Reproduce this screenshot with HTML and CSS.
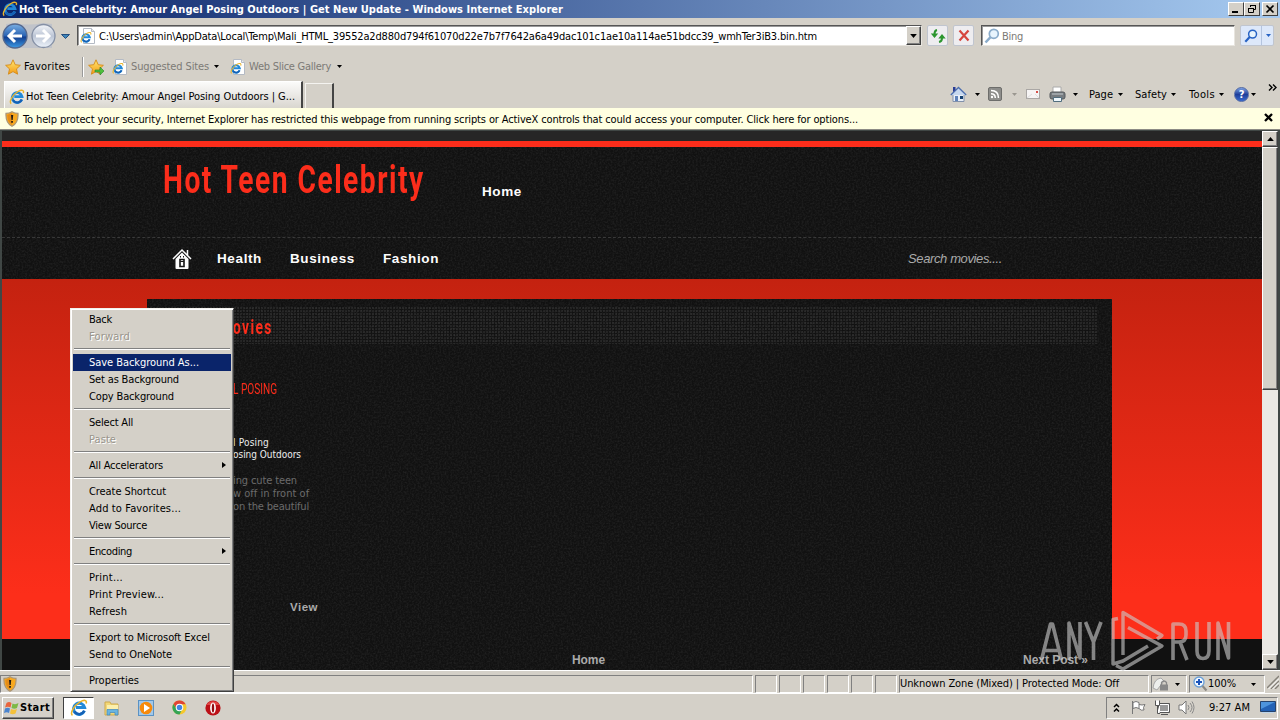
FILE: index.html
```html
<!DOCTYPE html>
<html lang="en">
<head>
<meta charset="utf-8">
<title>Windows Internet Explorer</title>
<link rel="stylesheet" href="styles.css">
</head>
<body>
<svg class="defs" width="0" height="0">
  <defs>
    <linearGradient id="blue" x1="0" y1="0" x2="0" y2="1"><stop offset="0" stop-color="#7ab0e4"/><stop offset=".48" stop-color="#2c65b4"/><stop offset=".55" stop-color="#123f91"/><stop offset="1" stop-color="#3d9be5"/></linearGradient>
    <linearGradient id="pale" x1="0" y1="0" x2="0" y2="1"><stop offset="0" stop-color="#f4f6fa"/><stop offset=".5" stop-color="#bcc5d5"/><stop offset="1" stop-color="#edf3fa"/></linearGradient>
    <linearGradient id="gold" x1="0" y1="0" x2="0" y2="1"><stop offset="0" stop-color="#ffe873"/><stop offset="1" stop-color="#f49a13"/></linearGradient>
    <symbol id="ie" viewBox="0 0 16 16"><path d="M12.8 10.5A5 5 0 1 1 13 7.6H5.3" fill="none" stroke="#2289d8" stroke-width="2.7"/><path d="M12.8 10.5A5 5 0 0 1 4 11" fill="none" stroke="#1660b4" stroke-width="2"/><path d="M2.2 14.6C-.3 12.6 3.500 5.700 9 2.500 12.500.5 15.400.8 14.300 4.100" fill="none" stroke="#e9b42c" stroke-width="1.400"/></symbol>
    <symbol id="iepage" viewBox="0 0 16 16"><path d="M3.500.5h8l3 3v12h-11z" fill="#fff" stroke="#b4bac4"/><path d="M11.500.5v3h3" fill="#e5e9f0" stroke="#b4bac4"/><svg x="0" y="3.500" width="12" height="12"><use href="#ie"/></svg></symbol>
    <symbol id="star" viewBox="0 0 16 16"><path d="M8 .8l2.200 4.900 5.200.6-3.900 3.600 1.100 5.300L8 12.600l-4.600 2.600 1.100-5.300L.6 6.300l5.200-.6z" fill="url(#gold)" stroke="#d58a18" stroke-width=".9"/></symbol>
    <symbol id="shield" viewBox="0 0 16 16"><path d="M8 .7c2 1.300 4 1.700 6 1.700.4 6-1.500 10.500-6 12.900C3.500 12.900 1.600 8.400 2 2.400c2 0 4-.4 6-1.700z" fill="#f8a91f" stroke="#a8957a" stroke-width="1.200"/><path d="M8 2v12c-3-2-4.500-5-4.700-10z" fill="#d97911" opacity=".6"/><path d="M7 4h2.200l-.5 5H7.500zM7.200 10h1.700v1.800H7.200z" fill="#241c12"/></symbol>
    <symbol id="down" viewBox="0 0 5 3"><path d="M0 0h5L2.500 3z" fill="currentColor"/></symbol>
    <symbol id="glass" viewBox="0 0 16 16"><circle cx="9.800" cy="5.800" r="4.500" fill="#e8f4fd" stroke="currentColor" stroke-width="1.700"/><path d="M6.500 9.200L1.500 14.500" stroke="currentColor" stroke-width="2.500"/></symbol>
    <filter id="grain" x="0" y="0" width="100%" height="100%"><feTurbulence type="fractalNoise" baseFrequency=".55" numOctaves="2" seed="4"/><feColorMatrix values="0 0 0 0 .5  0 0 0 0 .5  0 0 0 0 .5  .75 0 0 0 -.27"/></filter>
  </defs>
</svg>

<header class="titlebar">
  <svg class="i16"><use href="#ie"/></svg>
  <span class="t title" data-w="544">Hot Teen Celebrity: Amour Angel Posing Outdoors | Get New Update - Windows Internet Explorer</span>
  <div class="winbtns">
    <span class="wb"><svg width="12" height="10"><path d="M2 8h6" stroke="#000" stroke-width="2"/></svg></span>
    <span class="wb"><svg width="12" height="10"><path d="M4.500 3V1.500h5v4H8M4 1.500h6M2.500 4.500h5v4h-5zM2 4.500h6" fill="none" stroke="#000"/></svg></span>
    <span class="wb close"><svg width="12" height="10"><path d="M2.500 1.500l7 7M9.500 1.500l-7 7" stroke="#000" stroke-width="1.700"/></svg></span>
  </div>
</header>

<div class="navrow">
  <svg class="backfwd" width="77" height="32">
    <path d="M14 3Q28 6 43 3L52 4V28H6V4z" fill="#b8bdca" opacity=".7"/>
    <circle cx="15" cy="16" r="12" fill="url(#blue)" stroke="#54688e" stroke-width="1.300"/><path d="M22 16H10M15 10l-6 6 6 6" fill="none" stroke="#fff" stroke-width="3"/>
    <circle cx="43.500" cy="16" r="11.500" fill="url(#pale)" stroke="#8590a5" stroke-width="1.300"/><path d="M36 16h12M43 10l6 6-6 6" fill="none" stroke="#fff" stroke-width="3"/>
    <path d="M61.500 14.500h8l-4 4z" fill="#3e86ba" stroke="#234e80"/>
  </svg>
  <div class="address sunken"><svg class="i16"><use href="#iepage"/></svg><span class="t" data-w="718">C:\Users\admin\AppData\Local\Temp\Mali_HTML_39552a2d880d794f61070d22e7b7f7642a6a49dac101c1ae10a114ae51bdcc39_wmhTer3iB3.bin.htm</span><span class="combo raised"><svg class="arr big"><use href="#down"/></svg></span></div>
  <span class="tool"><svg width="16" height="16"><path d="M7 2Q4.500 2.500 4.500 6M9 14q3-.5 3-4" fill="none" stroke="#2c962f" stroke-width="2"/><path d="M.8 5.500h7.400L4.500 10zM8.300 10.500h7.400L12 6z" fill="#2c962f"/></svg></span>
  <span class="tool"><svg width="16" height="16"><path d="M3.500 2.500l9 10M12.500 2.500l-9 10" stroke="#d6463e" stroke-width="2.200"/></svg></span>
  <div class="search sunken"><svg class="i16 lens"><use href="#glass"/></svg><span class="t gray" data-w="21">Bing</span></div>
  <span class="tool go"><svg class="i14"><use href="#glass"/></svg><i><svg class="arr"><use href="#down"/></svg></i></span>
</div>

<div class="favrow">
  <svg class="i16"><use href="#star"/></svg><span class="t" data-w="46">Favorites</span>
  <i class="rule"></i>
  <svg class="i16"><use href="#star"/><path d="M7 11h5V8l4 4-4 4v-3H7z" fill="#4fbf3c" stroke="#25842a" stroke-width=".6"/></svg>
  <svg class="i16"><use href="#iepage"/></svg><span class="t gray" data-w="78">Suggested Sites</span><svg class="arr"><use href="#down"/></svg>
  <svg class="i16"><use href="#iepage"/></svg><span class="t gray" data-w="82">Web Slice Gallery</span><svg class="arr"><use href="#down"/></svg>
</div>

<div class="tabrow">
  <div class="tab"><svg class="i16"><use href="#ie"/></svg><span class="t" data-w="269">Hot Teen Celebrity: Amour Angel Posing Outdoors | G...</span></div>
  <div class="newtab"></div>
  <div class="cmds">
    <svg class="i17" viewBox="0 0 17 17"><path d="M3 8v7.500h11V8" fill="#e9eff8" stroke="#8291ab"/><path d="M.8 9L8.500 1.500 16.200 9" fill="#c7d8ef" stroke="#4c6eae" stroke-width="1.300"/><path d="M3 1h2.500v3L3 6z" fill="#293c95"/><path d="M5 10h3v5H5z" fill="#5f83ba"/><path d="M10 10h3v3h-3z" fill="#143f70"/></svg>
    <svg class="arr"><use href="#down"/></svg>
    <svg class="i14" viewBox="0 0 14 14"><rect x=".5" y=".5" width="13" height="13" rx="1.500" fill="#8d8d8b" stroke="#6d6d6b"/><path d="M3 3.500q7.500 0 7.500 7.500M3 6.700q4.300 0 4.300 4.300" fill="none" stroke="#fff" stroke-width="1.500"/><circle cx="4" cy="10" r="1.200" fill="#fff"/></svg>
    <svg class="arr dim"><use href="#down"/></svg>
    <svg class="i14" viewBox="0 0 14 14"><rect x=".5" y="2.500" width="13" height="9" fill="#f6f4f4" stroke="#aaa7a5"/><path d="M1 11l5-4M13 11L9 7" stroke="#ddd"/><path d="M10 4h2v2h-2z" fill="#d75048"/></svg>
    <svg class="i17" viewBox="0 0 17 17"><path d="M4 1h8v6H4z" fill="#fff" stroke="#aaa"/><rect x="1" y="6" width="15" height="7" rx="2" fill="#777c80" stroke="#54585c"/><path d="M3 8h11" stroke="#c5cace"/><path d="M4.500 11.500h8v4h-8z" fill="#eef7fc" stroke="#526e7e"/></svg>
    <svg class="arr"><use href="#down"/></svg>
    <span class="t" data-w="24">Page</span><svg class="arr"><use href="#down"/></svg>
    <span class="t" data-w="32">Safety</span><svg class="arr"><use href="#down"/></svg>
    <span class="t" data-w="26">Tools</span><svg class="arr"><use href="#down"/></svg>
    <span class="help">?</span><svg class="arr"><use href="#down"/></svg>
    <svg class="chev" width="9" height="7"><path d="M1 .5l3 3-3 3M5 .5l3 3-3 3" fill="none" stroke="#000" stroke-width="1.400"/></svg>
  </div>
</div>

<div class="infobar"><svg class="i16"><use href="#shield"/></svg><span class="t" data-w="835">To help protect your security, Internet Explorer has restricted this webpage from running scripts or ActiveX controls that could access your computer. Click here for options...</span><svg class="x" width="9" height="9"><path d="M1 1l7 7M8 1L1 8" stroke="#000" stroke-width="2.300"/></svg></div>

<main class="viewport">
  <div class="page">
    <div class="strip"></div>
    <div class="head grainy">
      <svg class="grain"><rect width="100%" height="100%" filter="url(#grain)"/></svg>
      <div class="brand"><span class="osw logo" data-scale="262">Hot Teen Celebrity</span><span class="t arial b" data-w="40">Home</span></div>
      <nav class="menu">
        <svg width="20" height="22"><path d="M1 11L10 2l9 9M15.500 2v5" fill="none" stroke="#fff" stroke-width="1.500"/><path d="M3.500 11L10 4.500l6.500 6.500v9q0 1-1 1h-11q-1 0-1-1z" fill="#fff"/><path d="M8 11.500h4v7H8z" fill="none" stroke="#111" stroke-width="1.600"/><path d="M8.500 8v1.500M11.500 8v1.500M8 13.500h4" stroke="#111"/></svg>
        <span class="t arial b" data-w="45">Health</span><span class="t arial b" data-w="65">Business</span><span class="t arial b" data-w="56">Fashion</span>
        <span class="t arial find" data-w="94">Search movies....</span>
      </nav>
    </div>
    <div class="redzone">
      <div class="panel grainy">
        <svg class="grain"><rect width="100%" height="100%" filter="url(#grain)"/></svg>
        <div class="dots"><span class="osw recent" data-scale="40">ovies</span></div>
        <div class="post">
          <h2><span class="osw" data-scale="44">L POSING</span></h2>
          <p class="white"><span class="t" data-w="36">l Posing</span><br><span class="t" data-w="68">osing Outdoors</span></p>
          <p class="excerpt"><span class="t" data-w="64">ing cute teen</span><br><span class="t" data-w="76">w off in front of</span><br><span class="t" data-w="76">on the beautiful</span></p>
          <span class="t arial view" data-w="28">View</span>
        </div>
        <div class="pager"><span class="t arial" data-w="33">Home</span><span class="t arial" data-w="65">Next Post »</span></div>
      </div>
    </div>
  </div>
  <div class="scroll">
    <span class="sbtn raised"><svg class="arr flip big"><use href="#down"/></svg></span>
    <span class="thumb raised"></span>
    <span class="sbtn raised"><svg class="arr big"><use href="#down"/></svg></span>
  </div>
</main>

<div class="status">
  <span class="pane first"><svg class="i16"><use href="#shield"/></svg></span>
  <span class="pane"></span><span class="pane"></span><span class="pane"></span><span class="pane"></span><span class="pane"></span><span class="pane"></span>
  <span class="pane zone"><span class="t" data-w="219">Unknown Zone (Mixed) | Protected Mode: Off</span></span>
  <span class="pane"><svg width="18" height="16"><path d="M1 12Q2 3 9 2l3 3-7 9z" fill="#eeefed" stroke="#a8a8a8"/><path d="M9.500 9V6.500q2.500-3 5 0V9" fill="none" stroke="#888" stroke-width="1.300"/><rect x="8" y="8.500" width="8" height="6" fill="#888"/></svg><svg class="arr"><use href="#down"/></svg></span>
  <span class="pane zoom"><svg width="15" height="16"><circle cx="6" cy="6" r="5" fill="#f2f8ff" stroke="#6a9fd7" stroke-width="1.300"/><path d="M3 6h6M6 3v6" stroke="#1d55bb" stroke-width="2"/><path d="M9.500 10l4 4.500" stroke="#8c8985" stroke-width="2.200"/></svg><span class="t" data-w="28">100%</span><svg class="arr"><use href="#down"/></svg></span>
  <svg class="grip" width="12" height="14"><path d="M0 13L12 1M4 14l8-8M8 14l4-4" stroke="#858179" stroke-width="1.400"/><path d="M1.500 14L12 3.500M5.500 14L12 7.500" stroke="#fff"/></svg>
</div>

<footer class="taskbar">
  <span class="start raised"><svg width="16" height="16"><path d="M2.500 3Q5 1 7.500 3L6.500 7.500Q4 6 1 7.500z" fill="#e9653d"/><path d="M8.500 3.500q3 1.500 6-.5l-1.500 5Q10.500 9.500 7.500 8z" fill="#7db946"/><path d="M1 8.500Q4 7 6 8.500L5 13Q3 11.500 0 13z" fill="#4a84cf"/><path d="M7 9q3 1.500 6 0l-1.500 4.500Q8.500 15 6 13.500z" fill="#f4c13a"/></svg><b class="t" data-w="30">Start</b></span>
  <span class="task on"><svg class="i18"><use href="#ie"/></svg></span>
  <svg class="i16" viewBox="0 0 16 16"><path d="M1 2h5l1 2h7v11H1z" fill="#f2d778" stroke="#cda94c"/><path d="M3 5h11v5H3z" fill="#fbefad"/><path d="M3 15V9.500h11V15h-3v-2.500H6V15z" fill="#69b4df" stroke="#4187bd" stroke-width=".7"/></svg>
  <svg class="i16" viewBox="0 0 16 16"><rect x=".5" y=".5" width="15" height="15" fill="#a2c8e9" stroke="#5a92c4"/><circle cx="8" cy="8" r="6.300" fill="#f78a0b"/><path d="M6 4l6 4-6 4z" fill="#fff"/></svg>
  <svg class="i15" viewBox="0 0 16 16"><circle cx="8" cy="8" r="7.500" fill="#f5c82c"/><path d="M1.500 4.200A7.500 7.500 0 0 1 14.600 4.500H8L5 9.500z" fill="#df4535"/><path d="M1.500 4.200A7.500 7.500 0 0 0 8 15.500L11 9.500H5z" fill="#34a455"/><circle cx="8" cy="8" r="3.500" fill="#4285e4" stroke="#fff" stroke-width="1.100"/></svg>
  <svg class="i16" viewBox="0 0 16 16"><circle cx="8" cy="8" r="7.600" fill="#bc1017"/><path d="M1.500 5a7.500 7.500 0 0 1 13 0z" fill="#e24443"/><ellipse cx="8" cy="8" rx="2.900" ry="5.500" fill="#fff"/><ellipse cx="8" cy="8" rx="1.200" ry="4.600" fill="#920b11"/></svg>
  <div class="tray">
    <svg width="7" height="10"><path d="M1 4l2.500-2.500L6 4M1 8.500L3.500 6 6 8.500" fill="none" stroke="#000" stroke-width="1.500"/></svg>
    <svg width="17" height="15"><path d="M2.500 1v13M3 2.500q3-2 6 0v6q-3-2-6 0zM9 4.500q3 1 6 0l-1.500 3 .5 2.500q-3 1-5-1.500" fill="#fff" stroke="#777"/></svg>
    <svg width="17" height="16"><path d="M4.500 3.500h11v9h-11z" fill="#999" stroke="#555"/><path d="M5.500 4.500h9v7h-9z" fill="none" stroke="#fff"/><path d="M7 14.500h7M1.500.5v5h4v-5M3.500 5v8.500H6" fill="#fff" stroke="#555"/></svg>
    <svg width="17" height="15"><path d="M1 5h3l4-4v13l-4-4H1z" fill="#fff" stroke="#777"/><path d="M10 5q2 2.500 0 5M12 3q4 4.500 0 9M14 1.500q4 6 0 12" fill="none" stroke="#888"/></svg>
    <span class="t" data-w="41">9:27 AM</span>
    <svg width="16" height="13"><path d="M.5.5h15v10H.5z" fill="#2462b5" stroke="#26436c"/><path d="M1 1h14L1 8z" fill="#4e94dc"/><path d="M2 11.500h12" stroke="#bdd4ea"/></svg>
  </div>
</footer>

<svg class="watermark" width="194" height="64" viewBox="0 0 194 64">
  <g fill="none" stroke="#c9c9c9" stroke-opacity=".62" stroke-width="3.600" stroke-linejoin="round">
    <path d="M2.500 52L11.500 16h2L22.500 52M5.500 42.500h14M30 52V15L41 50V14M46.500 14L54.500 34 62 14M54.500 34v18"/>
    <path d="M134 52V16h6q7 0 7 7v4q0 7-7 7h-6M141 34l7 18M158 14v29q0 7.500 6 7.500t6-7.500V14M179 52V15L189.500 50V14"/>
    <path d="M79 10.500L74 11.500V56L84 53 109 38M84 47V4.500L123 27.500 118 31M89 19.500L123 38 84 61 77 57.500" stroke-width="3.400"/>
  </g>
</svg>

<div class="context">
  <div class="mi"><span class="t" data-w="23">Back</span></div>
  <div class="mi off"><span class="t" data-w="41">Forward</span></div>
  <hr>
  <div class="mi sel"><span class="t" data-w="110">Save Background As...</span></div>
  <div class="mi"><span class="t" data-w="90">Set as Background</span></div>
  <div class="mi"><span class="t" data-w="85">Copy Background</span></div>
  <hr>
  <div class="mi"><span class="t" data-w="44">Select All</span></div>
  <div class="mi off"><span class="t" data-w="27">Paste</span></div>
  <hr>
  <div class="mi sub"><span class="t" data-w="74">All Accelerators</span></div>
  <hr>
  <div class="mi"><span class="t" data-w="77">Create Shortcut</span></div>
  <div class="mi"><span class="t" data-w="92">Add to Favorites...</span></div>
  <div class="mi"><span class="t" data-w="58">View Source</span></div>
  <hr>
  <div class="mi sub"><span class="t" data-w="43">Encoding</span></div>
  <hr>
  <div class="mi"><span class="t" data-w="34">Print...</span></div>
  <div class="mi"><span class="t" data-w="75">Print Preview...</span></div>
  <div class="mi"><span class="t" data-w="38">Refresh</span></div>
  <hr>
  <div class="mi"><span class="t" data-w="121">Export to Microsoft Excel</span></div>
  <div class="mi"><span class="t" data-w="83">Send to OneNote</span></div>
  <hr>
  <div class="mi"><span class="t" data-w="50">Properties</span></div>
</div>
<script src="fit.js"></script>
</body>
</html>
```
FILE: fit.js
```js
// Track each label so that its advance width equals its data-w value.
document.querySelectorAll('[data-w]').forEach(function (el) {
  var target = Number(el.dataset.w);
  var natural = el.getBoundingClientRect().width;
  el.style.letterSpacing = ((target - natural) / el.textContent.length).toFixed(4) + 'px';
});

// Condense display headings horizontally.
document.querySelectorAll('[data-scale]').forEach(function (el) {
  var natural = el.scrollWidth;
  el.style.transform = 'scaleX(' + (Number(el.dataset.scale) / natural).toFixed(4) + ')';
});
```
FILE: styles.css
```css
* { box-sizing: border-box; }
body { margin: 0; width: 1280px; height: 720px; overflow: hidden; position: relative; display: flex; flex-direction: column; background: #d4d0c8; color: #000; font: 11px/13px Tahoma, "DejaVu Sans Condensed", "DejaVu Sans", sans-serif; }
svg { display: block; flex: none; }
.defs { position: absolute; }
.t { display: inline-block; white-space: nowrap; flex: none; }
.gray { color: #7c7a76; }
.i14 { width: 14px; height: 14px; }
.i15 { width: 15px; height: 15px; }
.i16 { width: 16px; height: 16px; }
.i17 { width: 17px; height: 17px; }
.i18 { width: 18px; height: 18px; }
.arr { width: 5px; height: 3px; }
.arr.big { width: 7px; height: 4px; }
.flip { transform: rotate(180deg); }
.dim { color: #9a9790; }
.raised { background: #d4d0c8; border: 1px solid; border-color: #fff #404040 #404040 #fff; box-shadow: inset -1px -1px #808080; }
.sunken { background: #fff; border: 1px solid; border-color: #555 #e8e5df #e8e5df #555; box-shadow: inset 1px 1px #999; }

.titlebar { height: 18px; flex: none; display: flex; align-items: center; padding: 0 2px; background: linear-gradient(90deg, #0a246a, #a6caf0); color: #fff; }
.title { font-weight: bold; margin-left: 1px; }
.winbtns { margin-left: auto; display: flex; }
.wb { width: 16px; height: 14px; display: flex; align-items: center; justify-content: center; background: #d4d0c8; border: 1px solid; border-color: #fff #404040 #404040 #fff; }
.close { margin-left: 2px; }

.navrow { height: 35px; flex: none; display: flex; align-items: center; }
.address { width: 845px; height: 21px; display: flex; align-items: center; padding-left: 2px; }
.address .t { margin: 1px 0 0 3px; }
.combo { width: 15px; height: 19px; margin-left: auto; display: flex; align-items: center; justify-content: center; }
.tool { width: 21px; height: 21px; margin-left: 5px; display: flex; align-items: center; justify-content: center; background: #eeedf0; border: 1px solid #c0c5cf; border-radius: 2px; color: #2863c4; }
.search { width: 254px; height: 21px; margin-left: 7px; display: flex; align-items: center; padding-left: 2px; }
.search .t { margin: 1px 0 0 2px; }
.lens { color: #8baccb; }
.go { width: 34px; background: #dde8fa; justify-content: flex-start; padding-left: 3px; }
.go i { width: 14px; height: 19px; margin-left: 3px; padding: 8px 0 0 4px; border-left: 1px solid #b4c4df; }

.favrow { height: 28px; flex: none; display: flex; align-items: center; padding: 0 0 1px 5px; }
.favrow .t { margin-left: 3px; }
.favrow .arr { margin: 0 11px 0 5px; }
.favrow .arr:last-child { margin-left: 6px; }
.rule { width: 2px; height: 20px; margin: 0 4px 0 12px; border-left: 1px solid #999; border-right: 1px solid #fff; }
.rule + svg + svg { margin-left: 8px; }

.tabrow { height: 27px; flex: none; display: flex; }
.tab { width: 299px; margin-left: 4px; display: flex; align-items: center; padding: 3px 0 0 4px; background: linear-gradient(#fbfbfa, #e7e5e1 60%, #d9d6cf); border: 1px solid #fff; border-bottom: 0; border-right: 2px solid #444; }
.tab .t { margin-left: 1px; }
.newtab { width: 29px; margin: 2px 0 0 2px; border: 1px solid #f4f3f0; border-bottom: 0; border-right: 2px solid #444; }
.cmds { margin-left: auto; height: 26px; display: grid; align-items: center; justify-items: start; grid-template-columns: 25px 13px 24px 14px 23px 24px 16px 29px 17px 36px 18px 30px 15px 17px 17px 12px; }
.help { width: 15px; height: 15px; border-radius: 50%; background: linear-gradient(#7da1e2, #1d3e9a 50%, #3869ce); border: 1px solid #5269a3; color: #fff; font-weight: bold; text-align: center; }
.chev { align-self: start; margin-top: 3px; }

.infobar { height: 22px; flex: none; display: flex; align-items: center; padding-left: 4px; background: #ffffe1; border-bottom: 1px solid #8c8b84; }
.infobar .t { margin: 1px 0 0 3px; }
.x { margin: -2px 7px 0 auto; }

.viewport { height: 540px; flex: none; display: flex; border: 2px solid #404745; border-width: 1px 2px 0; }
.page { width: 1260px; display: flex; flex-direction: column; }
.strip { height: 16px; flex: none; background: #262626; border-bottom: 6px solid #fc2d1b; }
.grainy { background: #111; position: relative; }
.grain { position: absolute; inset: 0; width: 100%; height: 100%; opacity: .25; pointer-events: none; }
.head { height: 132px; flex: none; }
.brand { height: 91px; display: flex; padding-left: 161px; border-bottom: 1px dashed #353535; }
.osw { display: inline-block; white-space: nowrap; color: #fc2d1b; font-family: "Liberation Sans Narrow", Roboto, sans-serif; transform-origin: 0 50%; }
.logo { width: 262px; flex: none; font-size: 38px; line-height: 67px; font-weight: bold; letter-spacing: 2px; }
.arial { font-family: "Liberation Sans", Arial, sans-serif; }
.b { font-size: 13.5px; font-weight: bold; color: #fff; }
.logo { transform-origin: 0 50%; }
.brand .t { margin: 38px 0 0 57px; }
.menu { height: 41px; display: flex; align-items: center; padding-left: 170px; }
.menu .t { margin-left: 28px; }
.menu svg + .t { margin-left: 25px; }
.menu .find { margin-left: 469px; font-size: 13px; font-style: italic; color: #aaa; }
.redzone { flex: 1; padding: 20px 0 0 145px; background: linear-gradient(#c42210, #fd2e1a 315px, #fd2e1a 360px, #111 360px); }
.panel { width: 965px; height: 371px; padding-top: 8px; }
.dots { height: 37px; margin-right: 14px; padding: 3px 0 0 86px; background-image: radial-gradient(circle at 1px 1px, #2d2d2d 0.6px, transparent 0.9px); background-size: 3px 3px; }
.recent { font-size: 20px; line-height: 34px; letter-spacing: 2px; font-weight: bold; }
.post { padding-left: 86px; height: 298px; }
h2 { margin: 0; padding-top: 36px; font-size: 14px; line-height: 18px; font-weight: normal; }
p { margin: 0; }
.white { padding-top: 39px; line-height: 12px; font-size: 10px; color: #eee; height: 76px; }
.excerpt { color: #696969; }
.view { margin: 88px 0 0 57px; font-size: 11.5px; font-weight: bold; color: #aaa; }
.pager { display: flex; justify-content: space-between; padding: 12px 24px 0 425px; font-size: 12px; font-weight: bold; color: #aaa; }
.scroll { width: 16px; display: flex; flex-direction: column; background: #ebe9e5; }
.sbtn { height: 16px; display: flex; align-items: center; justify-content: center; }
.thumb { height: 243px; margin-bottom: auto; }

.status { height: 23px; flex: none; display: grid; grid-template-columns: 753px 22px 22px 22px 22px 22px 22px 250px 36px 76px 13px; column-gap: 2px; padding-top: 4px; border-top: 1px solid #fff; }
.pane { height: 18px; border: 1px solid; border-color: #808080 #fff #fff #808080; display: flex; align-items: center; }
.pane .arr { margin-left: 5px; }
.pane .t { margin-top: -2px; }
.pane.first { padding-left: 1px; }
.zoom { padding-left: 3px; }
.zoom .arr { margin-left: 15px; }

.taskbar { height: 27px; flex: none; display: flex; align-items: center; border-top: 1px solid #fff; padding: 1px 2px 0; }
.start { width: 52px; height: 22px; display: flex; align-items: center; padding-left: 1px; }
.task { width: 31px; height: 22px; margin: 0 10px 0 9px; display: flex; align-items: center; justify-content: center; border: 1px solid; border-color: #404040 #fff #fff #404040; background: #fff; }
.taskbar > svg { margin-right: 18px; }
.tray { width: 172px; height: 22px; margin-left: auto; display: grid; grid-template-columns: 17px 24px 24px 31px 51px 16px; align-items: center; justify-items: start; padding-left: 6px; border: 1px solid; border-color: #808080 #fff #fff #808080; }

.watermark { position: absolute; left: 1039px; top: 608px; }
.context { position: absolute; left: 70px; top: 308px; width: 164px; height: 384px; padding: 2px; background: #d4d0c8; border: 1px solid; border-color: #f2f0ec #404040 #404040 #f2f0ec; box-shadow: inset 1px 1px #fff, inset -1px -1px #808080; }
.mi { height: 17px; padding: 2px 0 0 16px; position: relative; }
.mi .t { display: block; width: max-content; }
.off { color: #99958c; text-shadow: 1px 1px #fff; }
.sel { background: #0a246a; color: #fff; }
.sub::after { content: ""; position: absolute; right: 5px; top: 5px; border: 3.5px solid transparent; border-left: 4px solid #000; border-right: 0; }
hr { height: 2px; margin: 3px 1px 4px; border: 0; border-top: 1px solid #808080; border-bottom: 1px solid #fff; }
```
